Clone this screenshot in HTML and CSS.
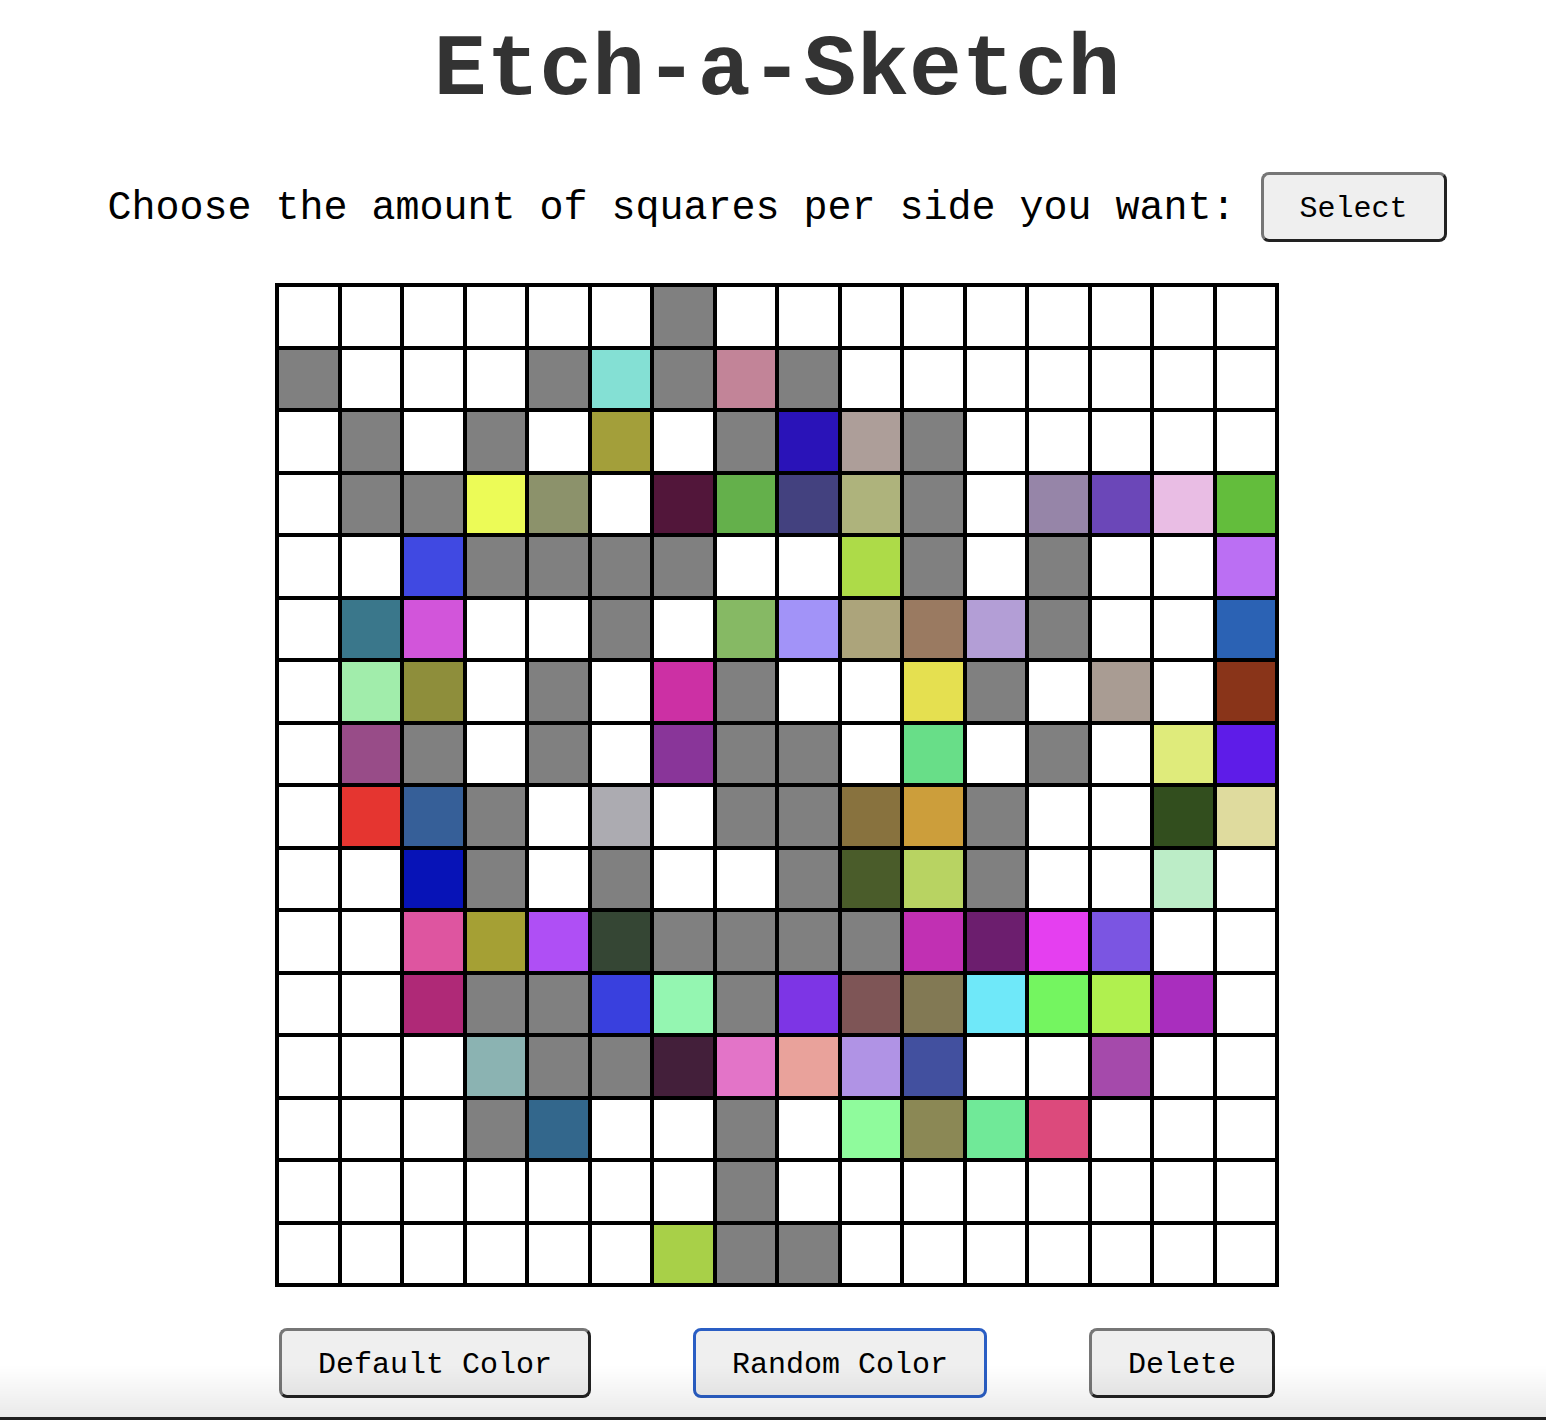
FILE: index.html
```html
<!DOCTYPE html>
<html lang="en">
<head>
<meta charset="utf-8">
<title>Etch-a-Sketch</title>
<link rel="stylesheet" href="styles.css">
</head>
<body>
<h1 class="title">Etch-a-Sketch</h1>
<div class="controls">
  <span class="prompt">Choose the amount of squares per side you want:</span>
  <button class="btn">Select</button>
</div>
<div class="board" id="board"></div>
<div class="actions">
  <button class="btn">Default Color</button>
  <button class="btn btn-focus">Random Color</button>
  <button class="btn">Delete</button>
</div>
<div class="window-edge"></div>
<script src="grid.js"></script>
</body>
</html>
```

FILE: styles.css
```css
html, body {
  background: #fff;
}
body {
  margin: 0;
  padding: 0 0 0 8px;
  font-family: "Liberation Mono", "Courier New", monospace;
  color: #000;
}
.title {
  margin: 21px 0 0;
  text-align: center;
  font-size: 88px;
  font-weight: bold;
  color: #333;
  line-height: 100px;
}
.controls {
  margin-top: 51px;
  display: flex;
  justify-content: center;
  align-items: center;
  gap: 25px;
}
.prompt {
  font-size: 40px;
  line-height: 46px;
  padding-top: 4px;
}
.btn {
  font-family: "Liberation Mono", "Courier New", monospace;
  font-size: 30px;
  line-height: 34px;
  color: #000;
  background: #efefef;
  padding: 17px 36px 13px;
  border: 3px solid;
  border-color: #767676 #222 #222 #767676;
  border-radius: 8px;
  margin: 0;
}
.btn-focus {
  border-color: #2a5ec4;
}
.board {
  box-sizing: border-box;
  width: 1004px;
  height: 1004px;
  margin: 41px auto 0;
  border: 2px solid #000;
  display: grid;
  grid-template-columns: repeat(16, 1fr);
  grid-template-rows: repeat(16, 1fr);
}
.cell {
  box-sizing: border-box;
  border: 2px solid #000;
  background: #fff;
}
.cell-grey {
  background: #808080;
}
.actions {
  width: 996px;
  margin: 41px auto 0;
  display: flex;
  justify-content: space-between;
}
.window-edge {
  position: fixed;
  left: 0;
  right: 0;
  bottom: 0;
  height: 52px;
  background: linear-gradient(to bottom, rgba(0,0,0,0) 0%, rgba(0,0,0,0.03) 40%, rgba(0,0,0,0.085) 100%);
  border-bottom: 3px solid #1e1e1e;
  pointer-events: none;
}
```

FILE: grid.js
```js
var rows = [
  "W W W W W W G W W W W W W W W W",
  "G W W W G 84e0d4 G c28498 G W W W W W W W",
  "W G W G W a39f3a W G 2a13b8 ad9e99 G W W W W W",
  "W G G ecfb57 8c926b W 52163a 64b04b 43417f aeb37c G W 9685a8 6b47b8 e9bde4 63bd3c",
  "W W 4049e2 G G G G W W addb48 G W G W W bb6ff3",
  "W 3a778b d255da W W G W 86b964 a293f8 aca47b 9a7a61 b39ed6 G W W 2b62b4",
  "W a1edab 8e8e3b W G W cc30a4 G W W e5e050 G W a99c93 W 893419",
  "W 984c88 G W G W 893599 G G W 68de88 W G W dfeb7b 5e1ce8",
  "W e53530 365f98 G W acabb1 W G G 88723e cc9e3b G W W 324e1e dfdb9e",
  "W W 0713b7 G W G W W G 4a5c2a b8d362 G W W bcedc7 W",
  "W W de55a0 a5a034 af4ff5 354634 G G G G c130b3 6c1e6e e53ff0 7b55e2 W W",
  "W W af2977 G G 3940de 94f6b1 G 7d35e5 7e5556 827954 6fe8f9 74f560 b0f04f a92ebe W",
  "W W W 8bb3b2 G G 431f3a e374c8 e9a29b b093e5 42509f W W a54aab W W",
  "W W W G 33678c W W G W 8ffb9c 8b8855 70e998 dc4a7c W W W",
  "W W W W W W W G W W W W W W W W",
  "W W W W W W a8d048 G G W W W W W W W"
];
var board = document.getElementById("board");
rows.forEach(function (row) {
  row.split(" ").forEach(function (v) {
    var d = document.createElement("div");
    d.className = "cell";
    if (v === "G") {
      d.className += " cell-grey";
    } else if (v !== "W") {
      d.style.backgroundColor = "#" + v;
    }
    board.appendChild(d);
  });
});
```
